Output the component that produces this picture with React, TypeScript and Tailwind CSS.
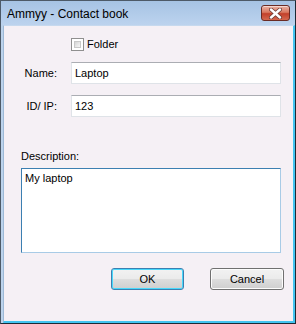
import React from "react";

const font = { fontFamily: '"Liberation Sans", Arial, sans-serif' };

const CloseButton = () => {
  return (
    <div className="w-[29px] h-[16px] rounded-[3px] border border-[#6a2b24] bg-[linear-gradient(#eab3a6_0%,#d9785f_45%,#c2402a_55%,#d4684f_100%)] flex items-center justify-center shadow-[inset_0_1px_0_rgba(255,255,255,0.5)]">
      <svg width="13" height="11" viewBox="0 0 13 11">
        <path
          d="M2 1.5 L11 9.5 M11 1.5 L2 9.5"
          stroke="#6b3a34"
          strokeWidth="4"
          strokeLinecap="round"
        />
        <path
          d="M2 1.5 L11 9.5 M11 1.5 L2 9.5"
          stroke="#ffffff"
          strokeWidth="2.4"
          strokeLinecap="round"
        />
      </svg>
    </div>
  );
};

const TextBox = ({ value }: { value: string }) => {
  return (
    <div className="w-[210px] h-[22px] bg-white border border-[#dfe3e8] border-t-[#abadb3] flex items-center pl-[3px] text-[11px] leading-[13px] text-black">
      {value}
    </div>
  );
};

const Button = ({ label, isDefault }: { label: string; isDefault?: boolean }) => {
  return (
    <div
      className={
        isDefault
          ? "w-[73px] h-[22px] rounded-[3px] border border-[#3c7fb1] shadow-[inset_0_0_0_1px_#48d8fb] bg-[linear-gradient(#f2f2f2_0%,#ebebeb_48%,#dddddd_52%,#cfcfcf_100%)] flex items-center justify-center text-[11px] leading-[13px] text-black"
          : "w-[74px] h-[22px] rounded-[3px] border border-[#707070] shadow-[inset_0_0_0_1px_#fcfcfc] bg-[linear-gradient(#f2f2f2_0%,#ebebeb_48%,#dddddd_52%,#cfcfcf_100%)] flex items-center justify-center text-[11px] leading-[13px] text-black"
      }
    >
      {label}
    </div>
  );
};

export default function App() {
  return (
    <div
      className="w-[296px] h-[324px] flex flex-col bg-[#bcd3ec] border border-[#4d5a68] border-r-[#1d2a35] border-b-[#1d2a35] overflow-hidden"
      style={font}
    >
      {/* title bar */}
      <div className="h-[24px] flex items-center justify-between pl-[6px] pr-[5px] bg-[linear-gradient(#a6c3e4,#bcd3ee)]">
        <span className="text-[12px] leading-[14px] text-black pt-[1px]">Ammyy - Contact book</span>
        <CloseButton />
      </div>

      <div className="flex-1 flex pl-[2px]">
        {/* client area */}
        <div className="flex-1 flex flex-col bg-[#f5f0f5] border-l border-[#9db9d6] border-t border-t-[#c6d9ee] border-r-2 border-r-[#43c4f0] border-b-2 border-b-[#43c4f0]">
          <div className="flex items-center pl-[67px] pt-[12px] gap-[3px]">
            <div className="w-[13px] h-[13px] border border-[#8f8f8f] bg-white p-[2px]">
              <div className="w-full h-full bg-[linear-gradient(135deg,#d5d5d5,#f6f6f6)] border border-[#c8c8c8]" />
            </div>
            <span className="text-[11px] leading-[13px] text-black">Folder</span>
          </div>

          <div className="flex items-center mt-[11px]">
            <span className="w-[53px] text-right text-[11px] leading-[13px] text-black">Name:</span>
            <div className="ml-[14px]">
              <TextBox value="Laptop" />
            </div>
          </div>

          <div className="flex items-center mt-[11px]">
            <span className="w-[53px] text-right text-[11px] leading-[13px] text-black">ID/ IP:</span>
            <div className="ml-[14px]">
              <TextBox value="123" />
            </div>
          </div>

          <div className="pl-[17px] mt-[33px] text-[11px] text-black leading-[13px]">Description:</div>

          <div className="ml-[17px] mt-[5px] w-[260px] h-[85px] bg-white border border-[#a8cbe6] border-t-[#3c7fb1] border-l-[#3c7fb1] px-[3px] pt-[3px] text-[11px] text-black leading-[13px]">
            My laptop
          </div>

          <div className="flex mt-[15px] pl-[107px] gap-[26px]">
            <Button label="OK" isDefault />
            <Button label="Cancel" />
          </div>
        </div>
      </div>
    </div>
  );
}
